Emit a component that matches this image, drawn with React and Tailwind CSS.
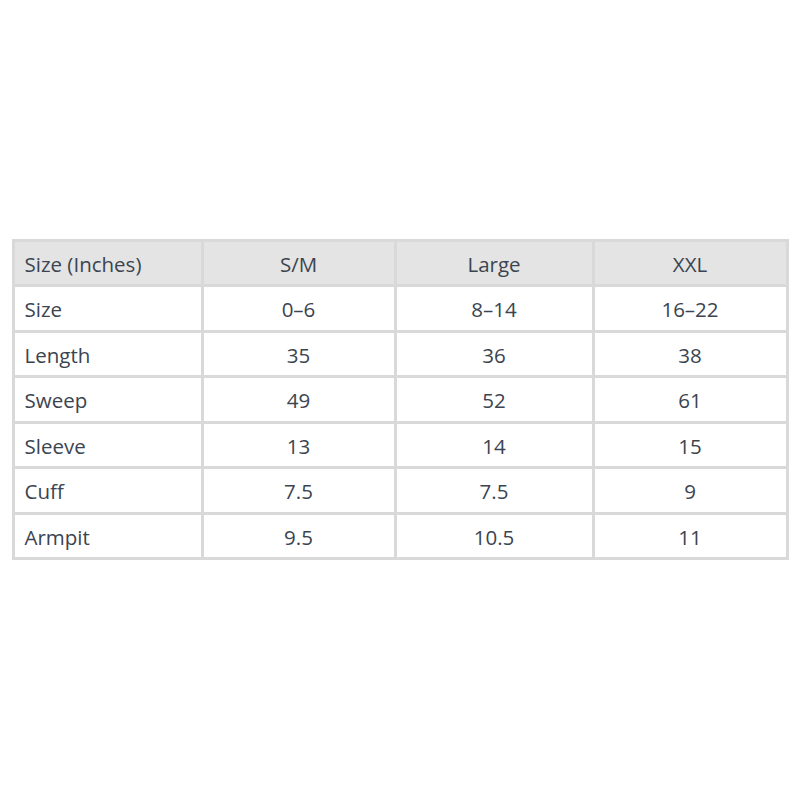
export default function App() {
  const rows = [
    ["Size", "0–6", "8–14", "16–22"],
    ["Length", "35", "36", "38"],
    ["Sweep", "49", "52", "61"],
    ["Sleeve", "13", "14", "15"],
    ["Cuff", "7.5", "7.5", "9"],
    ["Armpit", "9.5", "10.5", "11"],
  ];
  const cell = "border-[3px] border-[#d9d9d9] h-[45.5px] p-0 pt-[2px] leading-none";
  return (
    <div className="w-[800px] h-[800px] bg-white flex items-center justify-center" style={{ fontFamily: '"Open Sans", "Noto Sans", sans-serif' }}>
      <table className="border-collapse table-fixed w-[774px] text-[20.5px] text-[#3b4450] mt-[-1px]">
        <colgroup>
          <col className="w-[189px]" />
          <col className="w-[193px]" />
          <col className="w-[198px]" />
          <col className="w-[194px]" />
        </colgroup>
        <thead>
          <tr className="bg-[#e4e4e4]">
            <td className={cell + " pl-[10px] text-left"}>Size (Inches)</td>
            <td className={cell + " text-center"}>S/M</td>
            <td className={cell + " text-center"}>Large</td>
            <td className={cell + " text-center"}>XXL</td>
          </tr>
        </thead>
        <tbody>
          {rows.map((r) => (
            <tr key={r[0]}>
              <td className={cell + " pl-[10px] text-left"}>{r[0]}</td>
              <td className={cell + " text-center"}>{r[1]}</td>
              <td className={cell + " text-center"}>{r[2]}</td>
              <td className={cell + " text-center"}>{r[3]}</td>
            </tr>
          ))}
        </tbody>
      </table>
    </div>
  );
}
